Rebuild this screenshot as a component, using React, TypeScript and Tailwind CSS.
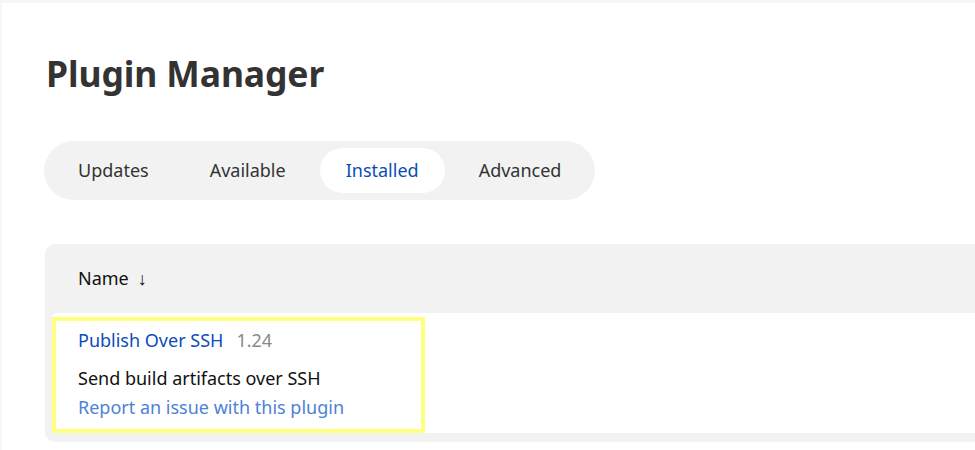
import React from 'react';

const tabs = ['Updates', 'Available', 'Installed', 'Advanced'];

export default function App() {
  const active = 'Installed';

  return (
    <div className="h-[450px] w-[975px] overflow-hidden bg-white border-t-[3px] border-l-2 border-[#f6f6f6] font-['Noto_Sans',sans-serif] text-[#333]">
      <div className="pl-[43px] pt-[46px]">
        {/* Page title */}
        <h1 className="ml-[1px] text-[35.5px] leading-[48px] font-bold text-[#333] tracking-[-0.1px]">Plugin Manager</h1>

        {/* Tab bar */}
        <div className="mt-[44px] -ml-[1px] inline-flex items-center gap-[7px] rounded-full bg-[#f2f2f2] p-[7px]">
          {tabs.map((t) => (
            <div
              key={t}
              className={
                t === active
                  ? 'h-[45px] flex items-center rounded-full bg-white px-[26px] text-[18px] text-[#0b4db8]'
                  : 'h-[45px] flex items-center rounded-full px-[27px] text-[18px] text-[#333]'
              }
            >
              {t}
            </div>
          ))}
        </div>

        {/* Plugin table */}
        <div className="mt-[44px] w-[960px] rounded-[10px] bg-[#f2f2f2] px-[7px] pb-[9px]">
          <div className="h-[69px] flex items-center pl-[26px] text-[18px] text-[#111]">
            Name <span className="ml-[9px]">↓</span>
          </div>
          <div className="rounded-[5px] bg-white pt-[4px]">
            <div className="w-[373px] h-[116px] border-[4px] border-[#ffff80] pl-[22px] pt-[6px]">
              <div className="flex items-baseline gap-[13px] text-[18px] leading-[26px]">
                <span className="text-[#0b4db8]">Publish Over SSH</span>
                <span className="text-[#8a8a8a]">1.24</span>
              </div>
              <div className="mt-[12px] text-[18px] leading-[26px] text-[#111]">Send build artifacts over SSH</div>
              <div className="mt-[3px] text-[18px] leading-[26px] text-[#4d82d6]">Report an issue with this plugin</div>
            </div>
          </div>
        </div>
      </div>
    </div>
  );
}
